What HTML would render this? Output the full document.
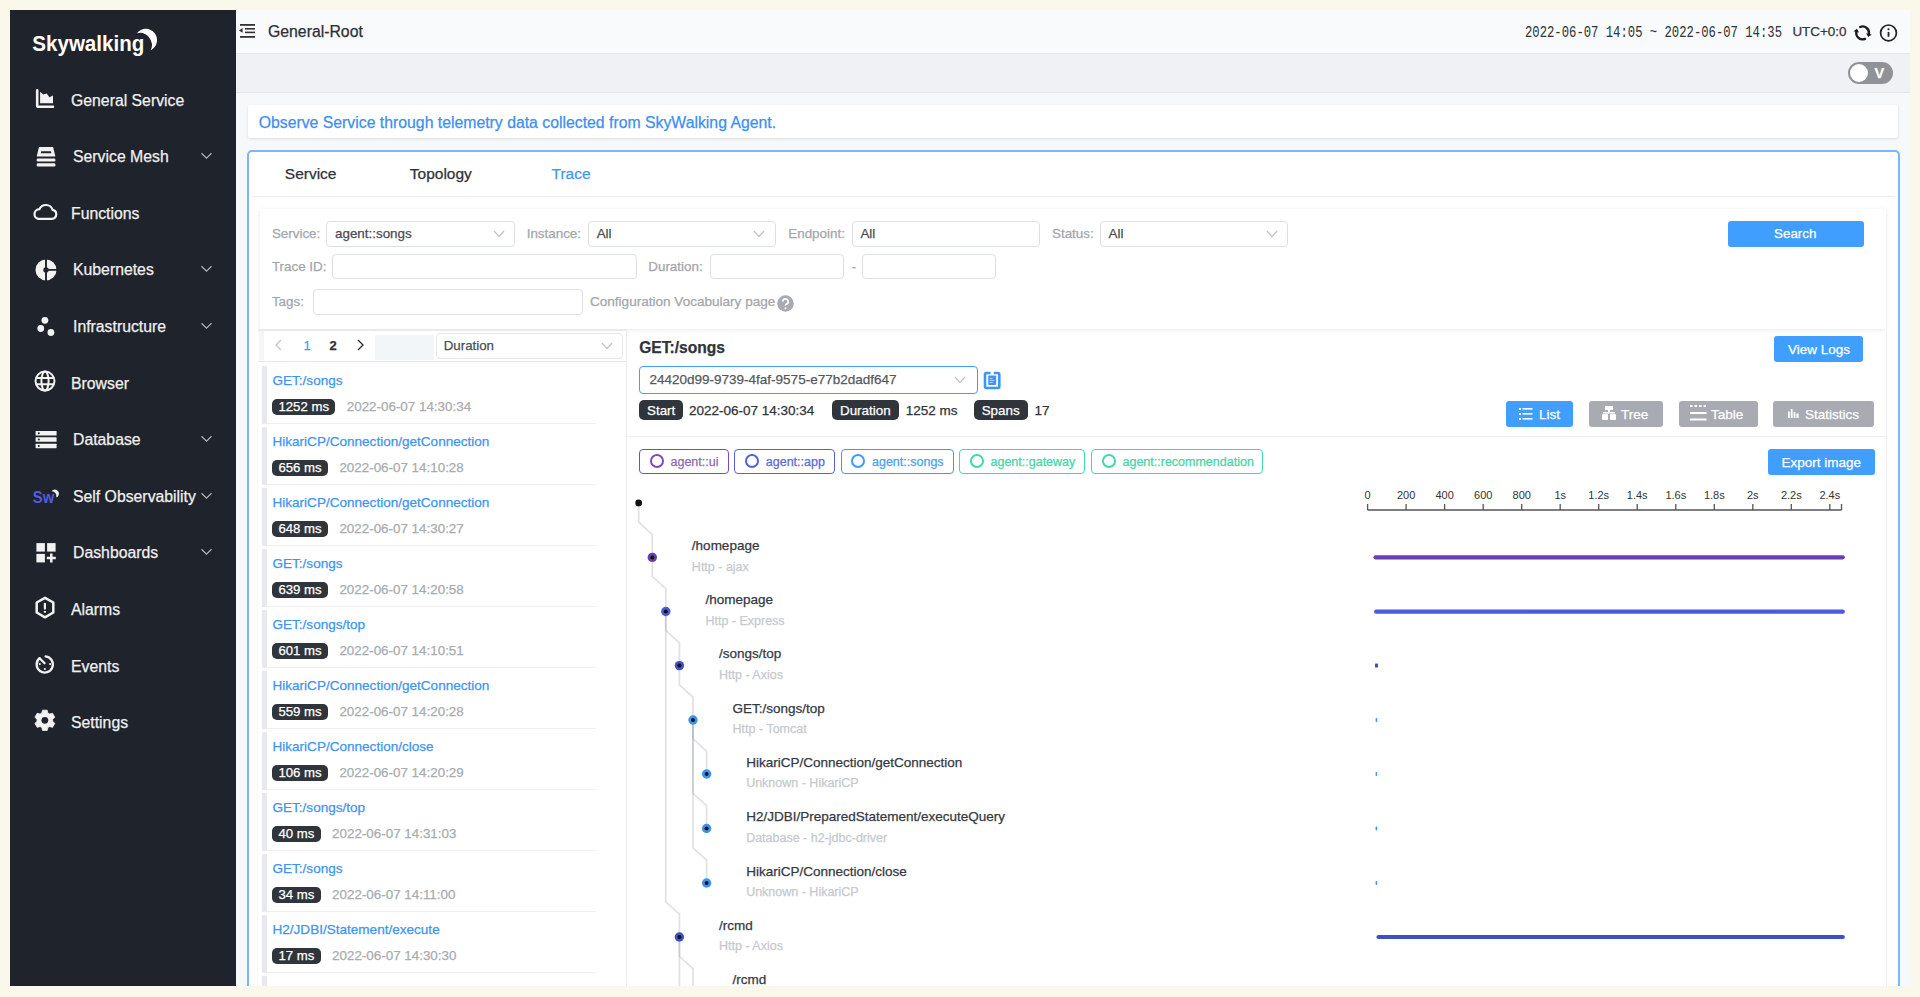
<!DOCTYPE html>
<html><head><meta charset="utf-8"><style>
*{box-sizing:border-box;margin:0;padding:0}
html,body{width:1920px;height:997px;overflow:hidden;background:#faf7eb;font-family:"Liberation Sans",sans-serif}
.a{position:absolute}
.t{position:absolute;white-space:nowrap;line-height:1;-webkit-text-stroke:0.25px currentColor}
svg{position:absolute;overflow:visible}
</style></head><body>
<div class="a" style="left:10.00px;top:10.00px;width:1900.00px;height:977.00px;background:#f7f8fa"></div>
<div class="a" style="left:236.00px;top:10.00px;width:1674.00px;height:43.50px;background:#f9fafb;border-bottom:1px solid #e4e7eb"></div>
<div class="a" style="left:236.00px;top:53.50px;width:1674.00px;height:39.50px;background:#eff1f4;border-bottom:1px solid #e2e5e9"></div>
<svg style="left:238px;top:23px" width="18" height="16" viewBox="0 0 18 16"><g fill="#333"><rect x="2" y="1" width="15" height="1.8"/><rect x="7" y="5" width="10" height="1.6"/><rect x="7" y="8.6" width="10" height="1.6"/><rect x="2" y="13" width="15" height="1.8"/><path d="M1 7.4 L4.6 5 V9.8Z"/></g></svg>
<div class="t" style="left:268.00px;top:23.93px;font-size:15.8px;color:#2b2f36;">General-Root</div>
<svg style="left:0;top:0" width="1920" height="60"><text x="1525" y="36.6" font-family="Liberation Mono" font-size="16" fill="#2f3237" textLength="257" lengthAdjust="spacingAndGlyphs" xml:space="preserve">2022-06-07 14:05 ~ 2022-06-07 14:35</text></svg>
<div class="t" style="left:1792.40px;top:24.96px;font-size:13.4px;color:#33363b;">UTC+0:0</div>
<svg style="left:0;top:0" width="1920" height="60"><g fill="none" stroke="#1a1a1a" stroke-width="2.3" stroke-linecap="round"><path d="M1860.20 26.97 A6.4 6.4 0 0 1 1868.86 34.23"/><path d="M1865.00 38.83 A6.4 6.4 0 0 1 1856.34 31.57"/></g><path d="M1868.26 37.07 L1871.76 34.54 L1866.09 33.33Z M1856.94 28.73 L1853.44 31.26 L1859.11 32.47Z" fill="#1a1a1a"/><circle cx="1888.5" cy="32.9" r="7.9" fill="none" stroke="#222" stroke-width="1.7"/><rect x="1887.6" y="32" width="1.8" height="4.8" rx="0.5" fill="#222"/><circle cx="1888.5" cy="29.2" r="1.05" fill="#222"/></svg>
<div class="a" style="left:1848.00px;top:62.00px;width:45.00px;height:22.00px;background:#909297;border-radius:11px"></div>
<div class="a" style="left:1850.00px;top:64.00px;width:18.00px;height:18.00px;background:#fff;border-radius:50%"></div>
<div class="t" style="left:1874.60px;top:66.04px;font-size:14.6px;color:#fff;font-weight:bold;">V</div>
<div class="a" style="left:247.50px;top:104.70px;width:1650.50px;height:33.70px;background:#fff;box-shadow:0 1px 3px rgba(0,0,0,.12);border-radius:2px"></div>
<div class="t" style="left:258.70px;top:114.63px;font-size:15.8px;color:#3d8ff0;">Observe Service through telemetry data collected from SkyWalking Agent.</div>
<div class="a" style="left:247.00px;top:150.00px;width:1652.50px;height:860.00px;background:#fff;border:2px solid #7ab6fb;border-radius:5px"></div>
<div class="t" style="left:284.80px;top:166.48px;font-size:15.5px;color:#2e3238;">Service</div>
<div class="t" style="left:409.80px;top:166.48px;font-size:15.5px;color:#2e3238;">Topology</div>
<div class="t" style="left:551.50px;top:166.48px;font-size:15.5px;color:#4497f2;">Trace</div>
<div class="a" style="left:252.00px;top:196.00px;width:1643.00px;height:1.20px;background:#eceef2"></div>
<div class="a" style="left:259.80px;top:208.70px;width:1626.70px;height:120.30px;background:#fff;box-shadow:0 1px 5px rgba(0,0,0,.09)"></div>
<div class="t" style="left:271.90px;top:227.26px;font-size:13.4px;color:#a3a6ab;">Service:</div>
<div class="a" style="left:326.00px;top:220.60px;width:189.00px;height:26.40px;border:1px solid #dcdfe6;border-radius:4px;background:#fff"></div>
<div class="t" style="left:335.00px;top:227.26px;font-size:13.4px;color:#4a4d52;">agent::songs</div>
<svg style="left:492.5px;top:229.5px" width="12" height="8" viewBox="0 0 12 8"><path d="M1 1 L6 6.5 L11 1" fill="none" stroke="#c0c4cc" stroke-width="1.3"/></svg>
<div class="t" style="left:526.70px;top:227.26px;font-size:13.4px;color:#a3a6ab;">Instance:</div>
<div class="a" style="left:587.70px;top:220.60px;width:188.30px;height:26.40px;border:1px solid #dcdfe6;border-radius:4px;background:#fff"></div>
<div class="t" style="left:596.70px;top:227.26px;font-size:13.4px;color:#4a4d52;">All</div>
<svg style="left:753px;top:229.5px" width="12" height="8" viewBox="0 0 12 8"><path d="M1 1 L6 6.5 L11 1" fill="none" stroke="#c0c4cc" stroke-width="1.3"/></svg>
<div class="t" style="left:788.30px;top:227.26px;font-size:13.4px;color:#a3a6ab;">Endpoint:</div>
<div class="a" style="left:852.00px;top:220.60px;width:188.30px;height:26.40px;border:1px solid #dcdfe6;border-radius:4px;background:#fff"></div>
<div class="t" style="left:860.40px;top:227.26px;font-size:13.4px;color:#4a4d52;">All</div>
<div class="t" style="left:1052.00px;top:227.26px;font-size:13.4px;color:#a3a6ab;">Status:</div>
<div class="a" style="left:1100.00px;top:220.60px;width:188.40px;height:26.40px;border:1px solid #dcdfe6;border-radius:4px;background:#fff"></div>
<div class="t" style="left:1108.50px;top:227.26px;font-size:13.4px;color:#4a4d52;">All</div>
<svg style="left:1266px;top:229.5px" width="12" height="8" viewBox="0 0 12 8"><path d="M1 1 L6 6.5 L11 1" fill="none" stroke="#c0c4cc" stroke-width="1.3"/></svg>
<div class="a" style="left:1728.00px;top:220.60px;width:136.00px;height:26.20px;background:#409eff;border-radius:3px"></div>
<div class="t" style="left:1774.00px;top:227.26px;font-size:13.4px;color:#fff;">Search</div>
<div class="t" style="left:271.90px;top:259.66px;font-size:13.4px;color:#a3a6ab;">Trace ID:</div>
<div class="a" style="left:332.30px;top:253.70px;width:304.40px;height:25.80px;border:1px solid #dcdfe6;border-radius:4px;background:#fff"></div>
<div class="t" style="left:648.30px;top:259.66px;font-size:13.4px;color:#a3a6ab;">Duration:</div>
<div class="a" style="left:710.00px;top:253.70px;width:134.30px;height:25.80px;border:1px solid #dcdfe6;border-radius:4px;background:#fff"></div>
<div class="t" style="left:851.70px;top:259.66px;font-size:13.4px;color:#a3a6ab;">-</div>
<div class="a" style="left:861.70px;top:253.70px;width:134.30px;height:25.80px;border:1px solid #dcdfe6;border-radius:4px;background:#fff"></div>
<div class="t" style="left:271.90px;top:294.86px;font-size:13.4px;color:#a3a6ab;">Tags:</div>
<div class="a" style="left:313.30px;top:289.00px;width:270.00px;height:25.70px;border:1px solid #dcdfe6;border-radius:4px;background:#fff"></div>
<div class="t" style="left:590.00px;top:295.13px;font-size:13.55px;color:#a3a6ab;">Configuration Vocabulary page</div>
<svg style="left:776.6px;top:294.6px" width="17" height="17" viewBox="0 0 17 17"><circle cx="8.5" cy="8.5" r="8.3" fill="#a8abb0"/><path d="M5.8 6.6 A2.7 2.7 0 1 1 9.4 9.1 Q8.5 9.5 8.5 10.6" fill="none" stroke="#fff" stroke-width="1.7"/><circle cx="8.5" cy="13.2" r="1.05" fill="#fff"/></svg>
<div class="a" style="left:258.00px;top:362.00px;width:368.00px;height:625.00px;background:#fff;box-shadow:-1px 0 2px rgba(0,0,0,.04)"></div>
<div class="a" style="left:258.00px;top:329.00px;width:368.00px;height:33.00px;background:#fff"></div>
<div class="a" style="left:258.00px;top:328.80px;width:368.00px;height:1.80px;background:#e8eaed"></div>
<div class="a" style="left:258.00px;top:360.60px;width:368.00px;height:1.60px;background:#e6e9ec"></div>
<div class="a" style="left:258.50px;top:330.60px;width:5.90px;height:30.00px;background:#f4f5f7"></div>
<div class="a" style="left:375.30px;top:334.50px;width:58.30px;height:25.00px;background:#f3f6f8"></div>
<svg style="left:274px;top:339px" width="9" height="12" viewBox="0 0 9 12"><path d="M7 1 L2 6 L7 11" fill="none" stroke="#c3c6cc" stroke-width="1.4"/></svg>
<div class="t" style="left:303.40px;top:339.20px;font-size:13px;color:#409eff;">1</div>
<div class="t" style="left:329.50px;top:339.20px;font-size:13px;color:#303133;font-weight:bold;">2</div>
<svg style="left:356px;top:339px" width="9" height="12" viewBox="0 0 9 12"><path d="M2 1 L7 6 L2 11" fill="none" stroke="#303133" stroke-width="1.4"/></svg>
<div class="a" style="left:435.60px;top:333.00px;width:187.40px;height:26.40px;border:1.5px solid #e6e8ec;border-radius:4px;background:#fff"></div>
<div class="t" style="left:443.75px;top:339.14px;font-size:13.3px;color:#4a4d52;">Duration</div>
<svg style="left:601px;top:342px" width="12" height="8" viewBox="0 0 12 8"><path d="M1 1 L6 6.5 L11 1" fill="none" stroke="#c0c4cc" stroke-width="1.3"/></svg>
<div class="a" style="left:626.00px;top:329.00px;width:1.00px;height:658.00px;background:#e9ecf0"></div>
<div class="a" style="left:262.00px;top:365.50px;width:4.80px;height:58.00px;background:#e8e9ee"></div>
<div class="a" style="left:266.50px;top:423.00px;width:329.50px;height:1.00px;background:#eef0f3"></div>
<div class="t" style="left:272.50px;top:373.53px;font-size:13.55px;color:#3d94f2;">GET:/songs</div>
<div class="a" style="left:272.20px;top:399.20px;width:63.05px;height:15.60px;background:#30353c;border-radius:5px"></div>
<div class="t" style="left:278.45px;top:400.13px;font-size:13.2px;color:#fff;">1252 ms</div>
<div class="t" style="left:346.75px;top:400.16px;font-size:13.4px;color:#a9abae;">2022-06-07 14:30:34</div>
<div class="a" style="left:262.00px;top:426.50px;width:4.80px;height:58.00px;background:#e8e9ee"></div>
<div class="a" style="left:266.50px;top:484.00px;width:329.50px;height:1.00px;background:#eef0f3"></div>
<div class="t" style="left:272.50px;top:434.53px;font-size:13.55px;color:#3d94f2;">HikariCP/Connection/getConnection</div>
<div class="a" style="left:272.20px;top:460.20px;width:55.72px;height:15.60px;background:#30353c;border-radius:5px"></div>
<div class="t" style="left:278.45px;top:461.13px;font-size:13.2px;color:#fff;">656 ms</div>
<div class="t" style="left:339.42px;top:461.16px;font-size:13.4px;color:#a9abae;">2022-06-07 14:10:28</div>
<div class="a" style="left:262.00px;top:487.50px;width:4.80px;height:58.00px;background:#e8e9ee"></div>
<div class="a" style="left:266.50px;top:545.00px;width:329.50px;height:1.00px;background:#eef0f3"></div>
<div class="t" style="left:272.50px;top:495.53px;font-size:13.55px;color:#3d94f2;">HikariCP/Connection/getConnection</div>
<div class="a" style="left:272.20px;top:521.20px;width:55.72px;height:15.60px;background:#30353c;border-radius:5px"></div>
<div class="t" style="left:278.45px;top:522.13px;font-size:13.2px;color:#fff;">648 ms</div>
<div class="t" style="left:339.42px;top:522.16px;font-size:13.4px;color:#a9abae;">2022-06-07 14:30:27</div>
<div class="a" style="left:262.00px;top:548.50px;width:4.80px;height:58.00px;background:#e8e9ee"></div>
<div class="a" style="left:266.50px;top:606.00px;width:329.50px;height:1.00px;background:#eef0f3"></div>
<div class="t" style="left:272.50px;top:556.53px;font-size:13.55px;color:#3d94f2;">GET:/songs</div>
<div class="a" style="left:272.20px;top:582.20px;width:55.72px;height:15.60px;background:#30353c;border-radius:5px"></div>
<div class="t" style="left:278.45px;top:583.13px;font-size:13.2px;color:#fff;">639 ms</div>
<div class="t" style="left:339.42px;top:583.16px;font-size:13.4px;color:#a9abae;">2022-06-07 14:20:58</div>
<div class="a" style="left:262.00px;top:609.50px;width:4.80px;height:58.00px;background:#e8e9ee"></div>
<div class="a" style="left:266.50px;top:667.00px;width:329.50px;height:1.00px;background:#eef0f3"></div>
<div class="t" style="left:272.50px;top:617.53px;font-size:13.55px;color:#3d94f2;">GET:/songs/top</div>
<div class="a" style="left:272.20px;top:643.20px;width:55.72px;height:15.60px;background:#30353c;border-radius:5px"></div>
<div class="t" style="left:278.45px;top:644.13px;font-size:13.2px;color:#fff;">601 ms</div>
<div class="t" style="left:339.42px;top:644.16px;font-size:13.4px;color:#a9abae;">2022-06-07 14:10:51</div>
<div class="a" style="left:262.00px;top:670.50px;width:4.80px;height:58.00px;background:#e8e9ee"></div>
<div class="a" style="left:266.50px;top:728.00px;width:329.50px;height:1.00px;background:#eef0f3"></div>
<div class="t" style="left:272.50px;top:678.53px;font-size:13.55px;color:#3d94f2;">HikariCP/Connection/getConnection</div>
<div class="a" style="left:272.20px;top:704.20px;width:55.72px;height:15.60px;background:#30353c;border-radius:5px"></div>
<div class="t" style="left:278.45px;top:705.13px;font-size:13.2px;color:#fff;">559 ms</div>
<div class="t" style="left:339.42px;top:705.16px;font-size:13.4px;color:#a9abae;">2022-06-07 14:20:28</div>
<div class="a" style="left:262.00px;top:731.50px;width:4.80px;height:58.00px;background:#e8e9ee"></div>
<div class="a" style="left:266.50px;top:789.00px;width:329.50px;height:1.00px;background:#eef0f3"></div>
<div class="t" style="left:272.50px;top:739.53px;font-size:13.55px;color:#3d94f2;">HikariCP/Connection/close</div>
<div class="a" style="left:272.20px;top:765.20px;width:55.72px;height:15.60px;background:#30353c;border-radius:5px"></div>
<div class="t" style="left:278.45px;top:766.13px;font-size:13.2px;color:#fff;">106 ms</div>
<div class="t" style="left:339.42px;top:766.16px;font-size:13.4px;color:#a9abae;">2022-06-07 14:20:29</div>
<div class="a" style="left:262.00px;top:792.50px;width:4.80px;height:58.00px;background:#e8e9ee"></div>
<div class="a" style="left:266.50px;top:850.00px;width:329.50px;height:1.00px;background:#eef0f3"></div>
<div class="t" style="left:272.50px;top:800.53px;font-size:13.55px;color:#3d94f2;">GET:/songs/top</div>
<div class="a" style="left:272.20px;top:826.20px;width:48.39px;height:15.60px;background:#30353c;border-radius:5px"></div>
<div class="t" style="left:278.45px;top:827.13px;font-size:13.2px;color:#fff;">40 ms</div>
<div class="t" style="left:332.09px;top:827.16px;font-size:13.4px;color:#a9abae;">2022-06-07 14:31:03</div>
<div class="a" style="left:262.00px;top:853.50px;width:4.80px;height:58.00px;background:#e8e9ee"></div>
<div class="a" style="left:266.50px;top:911.00px;width:329.50px;height:1.00px;background:#eef0f3"></div>
<div class="t" style="left:272.50px;top:861.53px;font-size:13.55px;color:#3d94f2;">GET:/songs</div>
<div class="a" style="left:272.20px;top:887.20px;width:48.39px;height:15.60px;background:#30353c;border-radius:5px"></div>
<div class="t" style="left:278.45px;top:888.13px;font-size:13.2px;color:#fff;">34 ms</div>
<div class="t" style="left:332.09px;top:888.16px;font-size:13.4px;color:#a9abae;">2022-06-07 14:11:00</div>
<div class="a" style="left:262.00px;top:914.50px;width:4.80px;height:58.00px;background:#e8e9ee"></div>
<div class="a" style="left:266.50px;top:972.00px;width:329.50px;height:1.00px;background:#eef0f3"></div>
<div class="t" style="left:272.50px;top:922.53px;font-size:13.55px;color:#3d94f2;">H2/JDBI/Statement/execute</div>
<div class="a" style="left:272.20px;top:948.20px;width:48.39px;height:15.60px;background:#30353c;border-radius:5px"></div>
<div class="t" style="left:278.45px;top:949.13px;font-size:13.2px;color:#fff;">17 ms</div>
<div class="t" style="left:332.09px;top:949.16px;font-size:13.4px;color:#a9abae;">2022-06-07 14:30:30</div>
<div class="a" style="left:262.00px;top:975.50px;width:4.80px;height:58.00px;background:#e8e9ee"></div>
<div class="a" style="left:266.50px;top:1033.00px;width:329.50px;height:1.00px;background:#eef0f3"></div>
<div class="a" style="left:1886.00px;top:329.00px;width:1.20px;height:658.00px;background:#eceef1"></div>
<div class="t" style="left:639.20px;top:339.79px;font-size:15.6px;color:#303338;font-weight:bold;">GET:/songs</div>
<div class="a" style="left:1774.40px;top:335.80px;width:88.90px;height:26.70px;background:#409eff;border-radius:3px"></div>
<div class="t" style="left:1788.00px;top:342.57px;font-size:13.5px;color:#fff;">View Logs</div>
<div class="a" style="left:639.00px;top:365.50px;width:338.60px;height:28.00px;border:1.6px solid #409eff;border-radius:4px;background:#fff"></div>
<div class="t" style="left:649.50px;top:372.87px;font-size:13.5px;color:#55585d;">24420d99-9739-4faf-9575-e77b2dadf647</div>
<svg style="left:954px;top:376px" width="12" height="8" viewBox="0 0 12 8"><path d="M1 1 L6 6.5 L11 1" fill="none" stroke="#c0c4cc" stroke-width="1.3"/></svg>
<svg style="left:983.8px;top:372px" width="17" height="17" viewBox="0 0 17 17"><path d="M6.5 1 H2.5 Q1 1 1 2.5 V14.5 Q1 16 2.5 16 H13.8 Q15.3 16 15.3 14.5 V2.5 Q15.3 1 13.8 1 H9.8" fill="none" stroke="#3d95f5" stroke-width="2.6"/><rect x="4.2" y="3.6" width="8" height="9.4" rx="1" fill="#3d95f5"/><rect x="5.6" y="6" width="3" height="1" fill="#a9d0fb"/><rect x="5.6" y="8" width="4.6" height="1" fill="#a9d0fb"/><rect x="5.6" y="10" width="3" height="1" fill="#a9d0fb"/></svg>
<div class="a" style="left:639.00px;top:400.00px;width:44.00px;height:19.80px;background:#30353c;border-radius:5px"></div>
<div class="t" style="left:647.00px;top:403.86px;font-size:13.4px;color:#fff;">Start</div>
<div class="t" style="left:689.00px;top:403.77px;font-size:13.5px;color:#303338;">2022-06-07 14:30:34</div>
<div class="a" style="left:832.00px;top:400.00px;width:66.60px;height:19.80px;background:#30353c;border-radius:5px"></div>
<div class="t" style="left:840.00px;top:403.86px;font-size:13.4px;color:#fff;">Duration</div>
<div class="t" style="left:905.70px;top:403.77px;font-size:13.5px;color:#303338;">1252 ms</div>
<div class="a" style="left:973.70px;top:400.00px;width:54.30px;height:19.80px;background:#30353c;border-radius:5px"></div>
<div class="t" style="left:981.70px;top:403.86px;font-size:13.4px;color:#fff;">Spans</div>
<div class="t" style="left:1034.40px;top:403.77px;font-size:13.5px;color:#303338;">17</div>
<div class="a" style="left:1505.60px;top:401.00px;width:67.40px;height:25.50px;background:#409eff;border-radius:3px"></div>
<svg style="left:1519px;top:407px" width="14" height="14" viewBox="0 0 14 14"><g fill="#fff"><rect x="0" y="1" width="2" height="2"/><rect x="3.5" y="1" width="10" height="1.6"/><rect x="0" y="6" width="2" height="2"/><rect x="3.5" y="6" width="10" height="1.6"/><rect x="0" y="11" width="2" height="2"/><rect x="3.5" y="11" width="10" height="1.6"/></g></svg>
<div class="t" style="left:1539.00px;top:407.57px;font-size:13.5px;color:#fff;">List</div>
<div class="a" style="left:1588.50px;top:401.00px;width:74.80px;height:25.50px;background:#a8abb2;border-radius:3px"></div>
<svg style="left:1602px;top:406px" width="14" height="15" viewBox="0 0 14 15"><g fill="#fff"><rect x="3" y="0" width="8" height="4"/><rect x="6" y="4" width="2" height="3"/><rect x="1" y="6" width="12" height="1.5"/><rect x="0" y="8" width="6" height="6" rx="1"/><rect x="8" y="8" width="6" height="6" rx="1"/></g></svg>
<div class="t" style="left:1621.00px;top:407.57px;font-size:13.5px;color:#fff;">Tree</div>
<div class="a" style="left:1678.50px;top:401.00px;width:79.20px;height:25.50px;background:#a8abb2;border-radius:3px"></div>
<svg style="left:1690px;top:405px" width="17" height="17" viewBox="0 0 17 17"><g fill="#fff"><rect x="0" y="0" width="2.5" height="2"/><rect x="4.5" y="0" width="2.5" height="2"/><rect x="9" y="0" width="2.5" height="2"/><rect x="13.5" y="0" width="2.5" height="2"/><rect x="0" y="7" width="16.5" height="2"/><rect x="0" y="13.5" width="16.5" height="2"/></g></svg>
<div class="t" style="left:1711.00px;top:407.57px;font-size:13.5px;color:#fff;">Table</div>
<div class="a" style="left:1772.70px;top:401.00px;width:101.70px;height:25.50px;background:#a8abb2;border-radius:3px"></div>
<svg style="left:1788px;top:409px" width="12" height="10" viewBox="0 0 12 10"><g fill="#fff"><rect x="0" y="2.5" width="1.8" height="6.5"/><rect x="2.8" y="0" width="1.8" height="9"/><rect x="5.6" y="3" width="1.8" height="6"/><rect x="8.4" y="4.5" width="2.2" height="4.5"/></g></svg>
<div class="t" style="left:1805.00px;top:407.57px;font-size:13.5px;color:#fff;">Statistics</div>
<div class="a" style="left:627.00px;top:436.30px;width:1259.00px;height:1.00px;background:#eceef2"></div>
<div class="a" style="left:639.00px;top:448.60px;width:89.80px;height:25.30px;border:1.5px solid #7a4bbd;border-radius:4px;background:#fff"></div>
<svg style="left:649.5px;top:454.3px" width="14" height="14" viewBox="0 0 14 14"><circle cx="7" cy="7" r="6" fill="none" stroke="#7a4bbd" stroke-width="2"/></svg>
<div class="t" style="left:670.50px;top:456.22px;font-size:12.5px;color:#8a6bb0;">agent::ui</div>
<div class="a" style="left:734.30px;top:448.60px;width:100.60px;height:25.30px;border:1.5px solid #5561d8;border-radius:4px;background:#fff"></div>
<svg style="left:744.8px;top:454.3px" width="14" height="14" viewBox="0 0 14 14"><circle cx="7" cy="7" r="6" fill="none" stroke="#5561d8" stroke-width="2"/></svg>
<div class="t" style="left:765.80px;top:456.22px;font-size:12.5px;color:#5b6ad6;">agent::app</div>
<div class="a" style="left:840.50px;top:448.60px;width:113.10px;height:25.30px;border:1.5px solid #3d9af5;border-radius:4px;background:#fff"></div>
<svg style="left:851.0px;top:454.3px" width="14" height="14" viewBox="0 0 14 14"><circle cx="7" cy="7" r="6" fill="none" stroke="#3d9af5" stroke-width="2"/></svg>
<div class="t" style="left:872.00px;top:456.22px;font-size:12.5px;color:#4a9ff0;">agent::songs</div>
<div class="a" style="left:959.00px;top:448.60px;width:126.00px;height:25.30px;border:1.5px solid #41d9a5;border-radius:4px;background:#fff"></div>
<svg style="left:969.5px;top:454.3px" width="14" height="14" viewBox="0 0 14 14"><circle cx="7" cy="7" r="6" fill="none" stroke="#41d9a5" stroke-width="2"/></svg>
<div class="t" style="left:990.50px;top:456.22px;font-size:12.5px;color:#45d6a6;">agent::gateway</div>
<div class="a" style="left:1091.00px;top:448.60px;width:172.00px;height:25.30px;border:1.5px solid #41d9a5;border-radius:4px;background:#fff"></div>
<svg style="left:1101.5px;top:454.3px" width="14" height="14" viewBox="0 0 14 14"><circle cx="7" cy="7" r="6" fill="none" stroke="#41d9a5" stroke-width="2"/></svg>
<div class="t" style="left:1122.50px;top:456.22px;font-size:12.5px;color:#45d6a6;">agent::recommendation</div>
<div class="a" style="left:1768.00px;top:449.00px;width:106.80px;height:26.40px;background:#409eff;border-radius:3px"></div>
<div class="t" style="left:1781.50px;top:456.07px;font-size:13.5px;color:#fff;">Export image</div>
<svg style="left:0;top:0" width="1920" height="997"><path d="M1367.6 510 H1841.5" stroke="#555" stroke-width="1.3"/><path d="M1367.6 504 V510" stroke="#555" stroke-width="1.3"/><text x="1367.6" y="499.3" font-size="11" fill="#333" text-anchor="middle" font-family="Liberation Sans">0</text><path d="M1406.1 504 V510" stroke="#555" stroke-width="1.3"/><text x="1406.1" y="499.3" font-size="11" fill="#333" text-anchor="middle" font-family="Liberation Sans">200</text><path d="M1444.6 504 V510" stroke="#555" stroke-width="1.3"/><text x="1444.6" y="499.3" font-size="11" fill="#333" text-anchor="middle" font-family="Liberation Sans">400</text><path d="M1483.2 504 V510" stroke="#555" stroke-width="1.3"/><text x="1483.2" y="499.3" font-size="11" fill="#333" text-anchor="middle" font-family="Liberation Sans">600</text><path d="M1521.7 504 V510" stroke="#555" stroke-width="1.3"/><text x="1521.7" y="499.3" font-size="11" fill="#333" text-anchor="middle" font-family="Liberation Sans">800</text><path d="M1560.2 504 V510" stroke="#555" stroke-width="1.3"/><text x="1560.2" y="499.3" font-size="11" fill="#333" text-anchor="middle" font-family="Liberation Sans">1s</text><path d="M1598.7 504 V510" stroke="#555" stroke-width="1.3"/><text x="1598.7" y="499.3" font-size="11" fill="#333" text-anchor="middle" font-family="Liberation Sans">1.2s</text><path d="M1637.2 504 V510" stroke="#555" stroke-width="1.3"/><text x="1637.2" y="499.3" font-size="11" fill="#333" text-anchor="middle" font-family="Liberation Sans">1.4s</text><path d="M1675.8 504 V510" stroke="#555" stroke-width="1.3"/><text x="1675.8" y="499.3" font-size="11" fill="#333" text-anchor="middle" font-family="Liberation Sans">1.6s</text><path d="M1714.3 504 V510" stroke="#555" stroke-width="1.3"/><text x="1714.3" y="499.3" font-size="11" fill="#333" text-anchor="middle" font-family="Liberation Sans">1.8s</text><path d="M1752.8 504 V510" stroke="#555" stroke-width="1.3"/><text x="1752.8" y="499.3" font-size="11" fill="#333" text-anchor="middle" font-family="Liberation Sans">2s</text><path d="M1791.3 504 V510" stroke="#555" stroke-width="1.3"/><text x="1791.3" y="499.3" font-size="11" fill="#333" text-anchor="middle" font-family="Liberation Sans">2.2s</text><path d="M1829.8 504 V510" stroke="#555" stroke-width="1.3"/><text x="1829.8" y="499.3" font-size="11" fill="#333" text-anchor="middle" font-family="Liberation Sans">2.4s</text><path d="M1841.5 504 V510" stroke="#555" stroke-width="1.3"/></svg>
<svg style="left:0;top:0" width="1920" height="997"><path d="M638.7 502.9 V522.2 L652.3 534.6 V557.4" fill="none" stroke="rgba(120,128,142,0.23)" stroke-width="1.8" stroke-linejoin="round"/><path d="M652.3 557.4 V576.3 L665.8 588.7 V611.5" fill="none" stroke="rgba(120,128,142,0.23)" stroke-width="1.8" stroke-linejoin="round"/><path d="M665.8 611.5 V630.4 L679.4 642.8 V665.6" fill="none" stroke="rgba(120,128,142,0.23)" stroke-width="1.8" stroke-linejoin="round"/><path d="M679.4 665.6 V684.8 L693.0 697.2 V720.0" fill="none" stroke="rgba(120,128,142,0.23)" stroke-width="1.8" stroke-linejoin="round"/><path d="M693.0 720.0 V738.8 L706.6 751.2 V774.0" fill="none" stroke="rgba(120,128,142,0.23)" stroke-width="1.8" stroke-linejoin="round"/><path d="M693.0 720.0 V793.3 L706.6 805.7 V828.5" fill="none" stroke="rgba(120,128,142,0.23)" stroke-width="1.8" stroke-linejoin="round"/><path d="M693.0 720.0 V847.8 L706.6 860.2 V883.0" fill="none" stroke="rgba(120,128,142,0.23)" stroke-width="1.8" stroke-linejoin="round"/><path d="M665.8 611.5 V901.8 L679.4 914.2 V937.0" fill="none" stroke="rgba(120,128,142,0.23)" stroke-width="1.8" stroke-linejoin="round"/><path d="M679.4 937.0 V956.3 L693.0 968.7 V991.5" fill="none" stroke="rgba(120,128,142,0.23)" stroke-width="1.8" stroke-linejoin="round"/><path d="M679.4 937.0 V1010.8 L693.0 1023.2 V1046.0" fill="none" stroke="rgba(120,128,142,0.23)" stroke-width="1.8" stroke-linejoin="round"/><circle cx="638.7" cy="502.9" r="3.4" fill="#111"/><circle cx="652.3" cy="557.4" r="4.7" fill="#6a3db3"/><circle cx="652.3" cy="557.4" r="2" fill="#111"/><circle cx="665.8" cy="611.5" r="4.7" fill="#4a5ad8"/><circle cx="665.8" cy="611.5" r="2" fill="#111"/><circle cx="679.4" cy="665.6" r="4.7" fill="#3f4fc9"/><circle cx="679.4" cy="665.6" r="2" fill="#111"/><circle cx="693.0" cy="720.0" r="4.7" fill="#3a94f2"/><circle cx="693.0" cy="720.0" r="2" fill="#111"/><circle cx="706.6" cy="774.0" r="4.7" fill="#3a94f2"/><circle cx="706.6" cy="774.0" r="2" fill="#111"/><circle cx="706.6" cy="828.5" r="4.7" fill="#3a94f2"/><circle cx="706.6" cy="828.5" r="2" fill="#111"/><circle cx="706.6" cy="883.0" r="4.7" fill="#3a94f2"/><circle cx="706.6" cy="883.0" r="2" fill="#111"/><circle cx="679.4" cy="937.0" r="4.7" fill="#3f4fc9"/><circle cx="679.4" cy="937.0" r="2" fill="#111"/><circle cx="693.0" cy="991.5" r="4.7" fill="#3f4fc9"/><circle cx="693.0" cy="991.5" r="2" fill="#111"/><circle cx="693.0" cy="1046" r="4.7" fill="#3f4fc9"/><circle cx="693.0" cy="1046" r="2" fill="#111"/></svg>
<div class="t" style="left:691.87px;top:538.97px;font-size:13.5px;color:#35393f;">/homepage</div>
<div class="t" style="left:691.87px;top:560.82px;font-size:12.5px;color:#c6c9ce;">Http - ajax</div>
<div class="t" style="left:705.44px;top:593.07px;font-size:13.5px;color:#35393f;">/homepage</div>
<div class="t" style="left:705.44px;top:614.92px;font-size:12.5px;color:#c6c9ce;">Http - Express</div>
<div class="t" style="left:719.01px;top:647.17px;font-size:13.5px;color:#35393f;">/songs/top</div>
<div class="t" style="left:719.01px;top:669.02px;font-size:12.5px;color:#c6c9ce;">Http - Axios</div>
<div class="t" style="left:732.58px;top:701.57px;font-size:13.5px;color:#35393f;">GET:/songs/top</div>
<div class="t" style="left:732.58px;top:723.42px;font-size:12.5px;color:#c6c9ce;">Http - Tomcat</div>
<div class="t" style="left:746.15px;top:755.57px;font-size:13.5px;color:#35393f;">HikariCP/Connection/getConnection</div>
<div class="t" style="left:746.15px;top:777.42px;font-size:12.5px;color:#c6c9ce;">Unknown - HikariCP</div>
<div class="t" style="left:746.15px;top:810.07px;font-size:13.5px;color:#35393f;">H2/JDBI/PreparedStatement/executeQuery</div>
<div class="t" style="left:746.15px;top:831.92px;font-size:12.5px;color:#c6c9ce;">Database - h2-jdbc-driver</div>
<div class="t" style="left:746.15px;top:864.57px;font-size:13.5px;color:#35393f;">HikariCP/Connection/close</div>
<div class="t" style="left:746.15px;top:886.42px;font-size:12.5px;color:#c6c9ce;">Unknown - HikariCP</div>
<div class="t" style="left:719.01px;top:918.57px;font-size:13.5px;color:#35393f;">/rcmd</div>
<div class="t" style="left:719.01px;top:940.42px;font-size:12.5px;color:#c6c9ce;">Http - Axios</div>
<div class="t" style="left:732.58px;top:973.07px;font-size:13.5px;color:#35393f;">/rcmd</div>
<div class="t" style="left:732.58px;top:994.92px;font-size:12.5px;color:#c6c9ce;">Http - Axios</div>
<svg style="left:0;top:0" width="1920" height="997"><path d="M1375.5 557.3 H1842.8" stroke="#6a3db3" stroke-width="4.2" stroke-linecap="round"/><path d="M1376.2 611.7 H1842.8" stroke="#4a5ad8" stroke-width="4.2" stroke-linecap="round"/><path d="M1378.5 937 H1842.8" stroke="#3f4fc9" stroke-width="4.2" stroke-linecap="round"/><rect x="1375" y="663.6" width="3" height="4" rx="0.7" fill="#3f4fc9"/><rect x="1375.6" y="718" width="1.6" height="4" rx="0.7" fill="#3a94f2"/><rect x="1375.6" y="772" width="1.6" height="4" rx="0.7" fill="#3a94f2"/><rect x="1375.6" y="826.5" width="1.6" height="4" rx="0.7" fill="#3a94f2"/><rect x="1375.6" y="881" width="1.6" height="4" rx="0.7" fill="#3a94f2"/></svg>
<div class="a" style="left:10.00px;top:10.00px;width:226.00px;height:977.00px;background:#1f232b"></div>
<svg style="left:0;top:0" width="240" height="80"><text x="32.3" y="51.4" font-family="Liberation Sans" font-weight="bold" font-size="22" fill="#fff" textLength="112" lengthAdjust="spacingAndGlyphs">Skywalking</text><path d="M137 33.2 A11.2 11.2 0 1 1 150.75 50.14 A12.2 12.2 0 0 0 137 33.2Z" fill="#fff"/></svg>
<div class="t" style="left:71.00px;top:92.63px;font-size:15.8px;color:#f0f0f0;">General Service</div>
<div class="t" style="left:73.00px;top:149.23px;font-size:15.8px;color:#f0f0f0;">Service Mesh</div>
<svg style="left:200px;top:152.1px" width="12" height="8" viewBox="0 0 12 8"><path d="M1.5 1.3 L6.5 6.1 L11.5 1.3" fill="none" stroke="#b5b5b5" stroke-width="1.2"/></svg>
<div class="t" style="left:71.00px;top:205.83px;font-size:15.8px;color:#f0f0f0;">Functions</div>
<div class="t" style="left:73.00px;top:262.43px;font-size:15.8px;color:#f0f0f0;">Kubernetes</div>
<svg style="left:200px;top:265.3px" width="12" height="8" viewBox="0 0 12 8"><path d="M1.5 1.3 L6.5 6.1 L11.5 1.3" fill="none" stroke="#b5b5b5" stroke-width="1.2"/></svg>
<div class="t" style="left:73.00px;top:319.03px;font-size:15.8px;color:#f0f0f0;">Infrastructure</div>
<svg style="left:200px;top:321.9px" width="12" height="8" viewBox="0 0 12 8"><path d="M1.5 1.3 L6.5 6.1 L11.5 1.3" fill="none" stroke="#b5b5b5" stroke-width="1.2"/></svg>
<div class="t" style="left:71.00px;top:375.63px;font-size:15.8px;color:#f0f0f0;">Browser</div>
<div class="t" style="left:73.00px;top:432.23px;font-size:15.8px;color:#f0f0f0;">Database</div>
<svg style="left:200px;top:435.1px" width="12" height="8" viewBox="0 0 12 8"><path d="M1.5 1.3 L6.5 6.1 L11.5 1.3" fill="none" stroke="#b5b5b5" stroke-width="1.2"/></svg>
<div class="t" style="left:73.00px;top:488.83px;font-size:15.8px;color:#f0f0f0;">Self Observability</div>
<svg style="left:200px;top:491.7px" width="12" height="8" viewBox="0 0 12 8"><path d="M1.5 1.3 L6.5 6.1 L11.5 1.3" fill="none" stroke="#b5b5b5" stroke-width="1.2"/></svg>
<div class="t" style="left:73.00px;top:545.43px;font-size:15.8px;color:#f0f0f0;">Dashboards</div>
<svg style="left:200px;top:548.3px" width="12" height="8" viewBox="0 0 12 8"><path d="M1.5 1.3 L6.5 6.1 L11.5 1.3" fill="none" stroke="#b5b5b5" stroke-width="1.2"/></svg>
<div class="t" style="left:71.00px;top:602.03px;font-size:15.8px;color:#f0f0f0;">Alarms</div>
<div class="t" style="left:71.00px;top:658.63px;font-size:15.8px;color:#f0f0f0;">Events</div>
<div class="t" style="left:71.00px;top:715.23px;font-size:15.8px;color:#f0f0f0;">Settings</div>
<svg style="left:0;top:0" width="240" height="760"><path d="M37.2 90.4 V105.4 Q37.2 106.8 38.6 106.8 H53" fill="none" stroke="#f2f2f2" stroke-width="2.6" stroke-linecap="round"/><path d="M40.1 103.3 V91.8 L43.2 94.6 L46.6 93.4 L49.5 97.2 L53 95.6 V103.3Z" fill="#f2f2f2"/><path d="M39 147.1 H53.1 L55.4 156.4 H36.7Z M41.2 151.3 L40.8 153.2 H51.3 L50.9 151.3Z" fill="#f2f2f2" fill-rule="evenodd"/><rect x="36.7" y="158.5" width="18.7" height="3" rx="1.2" fill="#f2f2f2"/><rect x="36.7" y="163.3" width="18.7" height="3.1" rx="1.2" fill="#f2f2f2"/><path d="M38.4 218.9 H51.8 A4.6 4.6 0 0 0 52.6 209.8 A7.1 7.1 0 0 0 39.4 209.2 A4.9 4.9 0 0 0 38.4 218.9Z" fill="none" stroke="#f2f2f2" stroke-width="2.2" stroke-linejoin="round"/><circle cx="46" cy="269.9" r="10.5" fill="#f2f2f2"/><circle cx="46" cy="269.9" r="2.7" fill="#1f232b"/><path d="M46 258.5 V281.5 M46 269.9 H57.5" stroke="#1f232b" stroke-width="1.9"/><circle cx="44.9" cy="320.3" r="3.4" fill="#f2f2f2"/><circle cx="40.75" cy="328.5" r="3.4" fill="#f2f2f2"/><circle cx="50.9" cy="332.5" r="3.4" fill="#f2f2f2"/><g fill="none" stroke="#f2f2f2" stroke-width="2"><circle cx="45" cy="381.1" r="9.5"/><ellipse cx="45" cy="381.1" rx="3.6" ry="9.5"/><path d="M36.5 377.9 H53.5 M36.5 384.3 H53.5"/></g><rect x="35.6" y="431" width="21" height="4.5" rx="0.6" fill="#f2f2f2"/><circle cx="38.8" cy="433.25" r="1" fill="#1f232b"/><rect x="35.6" y="437.3" width="21" height="4.5" rx="0.6" fill="#f2f2f2"/><circle cx="38.8" cy="439.55" r="1" fill="#1f232b"/><rect x="35.6" y="443.7" width="21" height="4.5" rx="0.6" fill="#f2f2f2"/><circle cx="38.8" cy="445.95" r="1" fill="#1f232b"/><text x="32.8" y="502.8" font-family="Liberation Sans" font-weight="bold" font-size="17" fill="#5859e2" textLength="21.4" lengthAdjust="spacingAndGlyphs">Sw</text><path d="M51.6 491.2 A4.1 4.1 0 1 1 56.3 497.5 A4.9 4.9 0 0 0 51.6 491.2Z" fill="#f2f2f2"/><rect x="36.4" y="543.1" width="8.5" height="8.5" fill="#f2f2f2"/><rect x="47.1" y="543.1" width="8.5" height="8.5" fill="#f2f2f2"/><rect x="36.4" y="553.9" width="8.5" height="8.5" fill="#f2f2f2"/><path d="M51.3 553.4 V562.6 M46.8 558 H55.8" stroke="#f2f2f2" stroke-width="2.5"/><path d="M45 597.8 L53.3 602.5 V612.5 L45 617.3 L36.7 612.5 V602.5Z" fill="none" stroke="#f2f2f2" stroke-width="2.5" stroke-linejoin="round"/><path d="M44.9 603.8 V608.6" stroke="#f2f2f2" stroke-width="2.2" stroke-linecap="round"/><rect x="43.8" y="610.9" width="2.2" height="1.8" fill="#f2f2f2"/><path d="M45.6 656.4 A8.1 8.1 0 1 1 39.6 658.2" fill="none" stroke="#f2f2f2" stroke-width="2.3" stroke-linecap="round"/><path d="M39.6 658.2 L44.6 663.3" stroke="#f2f2f2" stroke-width="2.3" stroke-linecap="round"/><circle cx="39.8" cy="664.1" r="1.05" fill="#f2f2f2"/><circle cx="50.1" cy="664.1" r="1.05" fill="#f2f2f2"/><circle cx="44.85" cy="669" r="1.05" fill="#f2f2f2"/><path d="M41.89 712.98 L42.51 710.17 L47.19 710.17 L47.81 712.98 L49.71 714.07 L52.46 713.21 L54.80 717.26 L52.67 719.20 L52.67 721.40 L54.80 723.34 L52.46 727.39 L49.71 726.53 L47.81 727.62 L47.19 730.43 L42.51 730.43 L41.89 727.62 L39.99 726.53 L37.24 727.39 L34.90 723.34 L37.03 721.40 L37.03 719.20 L34.90 717.26 L37.24 713.21 L39.99 714.07Z" fill="#f2f2f2" stroke="#f2f2f2" stroke-width="0.8" stroke-linejoin="round"/><circle cx="44.85" cy="720.3" r="3.4" fill="#1f232b"/></svg>
<div class="a" style="left:0.00px;top:986.20px;width:1920.00px;height:10.80px;background:#faf7eb"></div>
<div class="a" style="left:1910.00px;top:0.00px;width:10.00px;height:997.00px;background:#faf7eb"></div>
</body></html>
